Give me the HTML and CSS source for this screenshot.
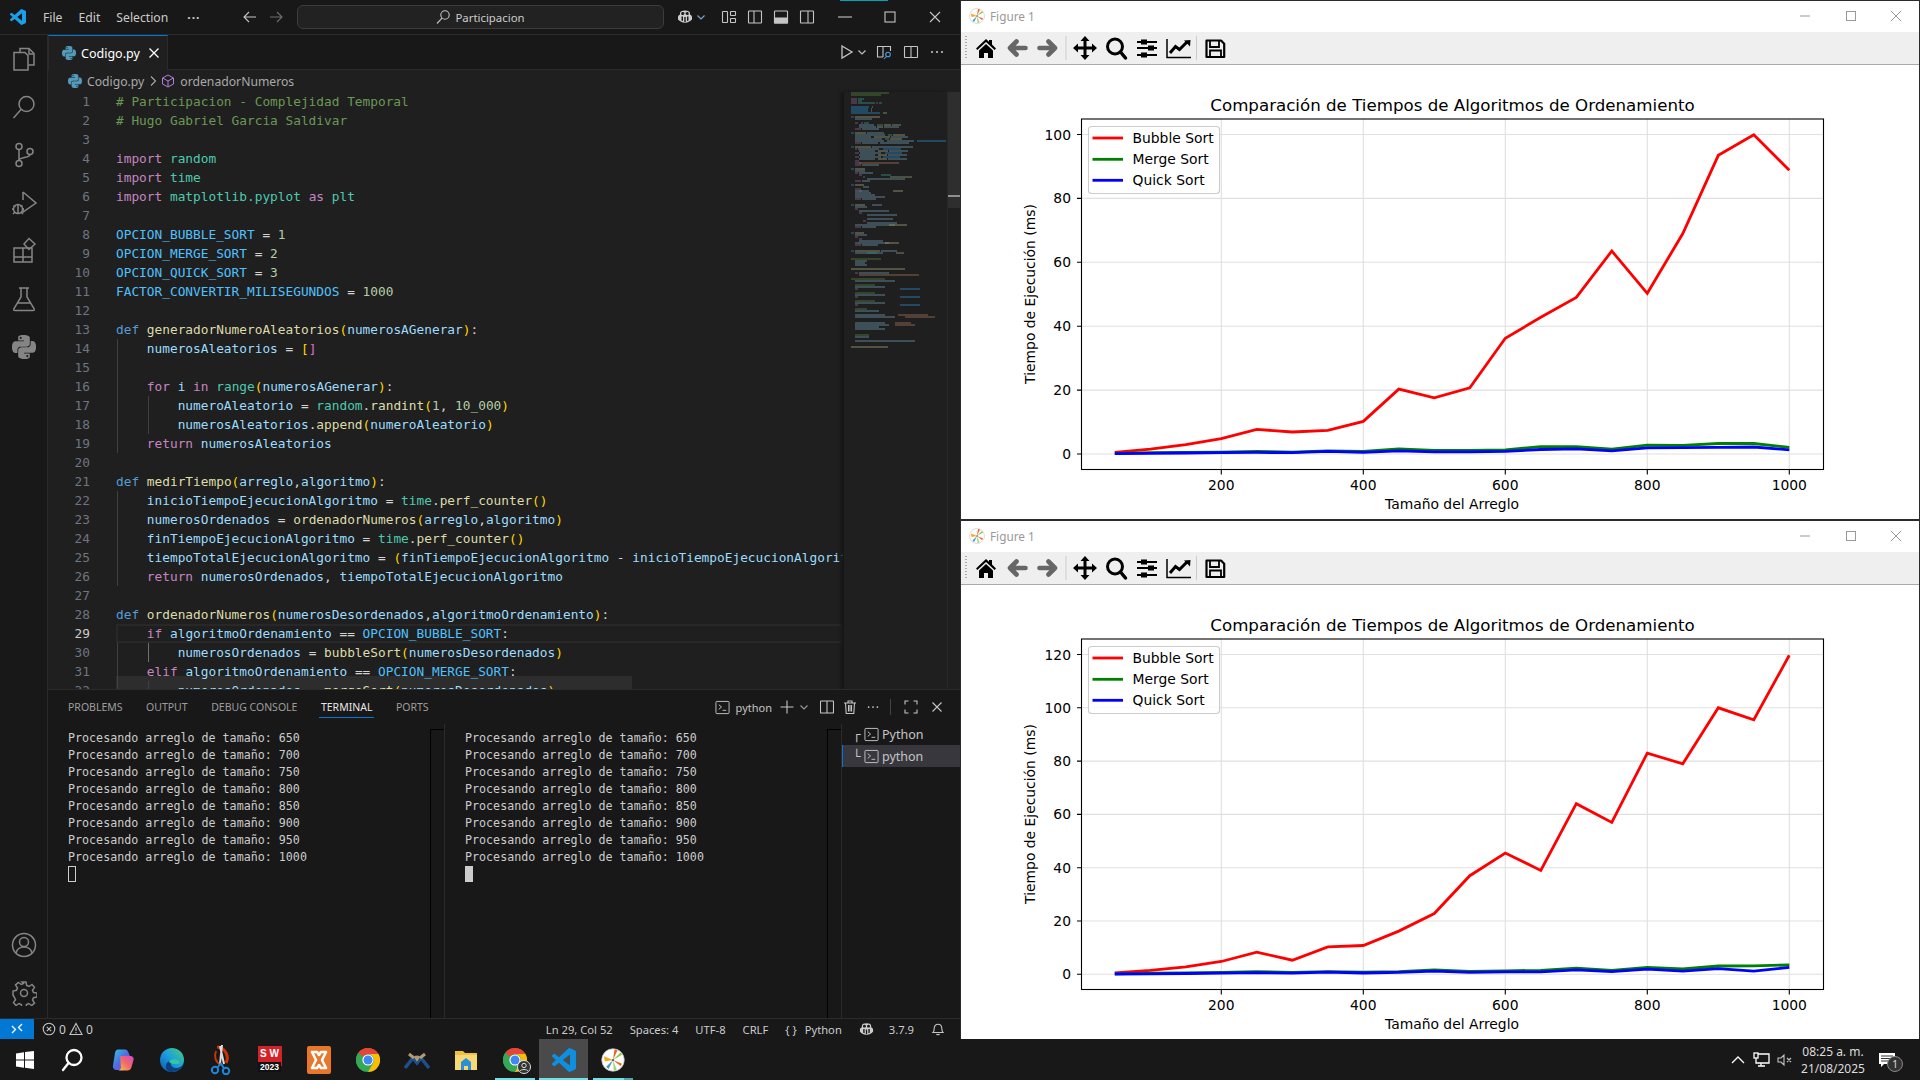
FILE: index.html
```html
<!DOCTYPE html>
<html lang="es">
<head>
<meta charset="utf-8">
<title>Codigo.py</title>
<link rel="stylesheet" href="styles.css">
</head>
<body>
<svg class="defs" width="0" height="0" aria-hidden="true">
  <symbol id="vsc" viewBox="0 0 24 24"><path d="M23.15 2.587L18.21.21a1.494 1.494 0 0 0-1.705.29l-9.46 8.63-4.12-3.128a.999.999 0 0 0-1.276.057L.327 7.261A1 1 0 0 0 .326 8.74L3.899 12 .326 15.26a1 1 0 0 0 .001 1.479L1.65 17.94a.999.999 0 0 0 1.276.057l4.12-3.128 9.46 8.63a1.492 1.492 0 0 0 1.704.29l4.942-2.377A1.5 1.5 0 0 0 24 20.06V3.939a1.5 1.5 0 0 0-.85-1.352zm-5.146 14.861L10.826 12l7.178-5.448v10.896z"/></symbol>
  <symbol id="py" viewBox="0 0 24 24"><path d="M14.25.18l.9.2.73.26.59.3.45.32.34.34.25.34.16.33.1.3.04.26.02.2-.01.13V8.5l-.05.63-.13.55-.21.46-.26.38-.3.31-.33.25-.35.19-.35.14-.33.1-.3.07-.26.04-.21.02H8.77l-.69.05-.59.14-.5.22-.41.27-.33.32-.27.35-.2.36-.15.37-.1.35-.07.32-.04.27-.02.21v3.06H3.17l-.21-.03-.28-.07-.32-.12-.35-.18-.36-.26-.36-.36-.35-.46-.32-.59-.28-.73-.21-.88-.14-1.05-.05-1.23.06-1.22.16-1.04.24-.87.32-.71.36-.57.4-.44.42-.33.42-.24.4-.16.36-.1.32-.05.24-.01h.16l.06.01h8.16v-.83H6.18l-.01-2.75-.02-.37.05-.34.11-.31.17-.28.25-.26.31-.23.38-.2.44-.18.51-.15.58-.12.64-.1.71-.06.77-.04.84-.02 1.27.05zm-6.3 1.98l-.23.33-.08.41.08.41.23.34.33.22.41.09.41-.09.33-.22.23-.34.08-.41-.08-.41-.23-.33-.33-.22-.41-.09-.41.09zm13.09 3.95l.28.06.32.12.35.18.36.27.36.35.35.47.32.59.28.73.21.88.14 1.04.05 1.23-.06 1.23-.16 1.04-.24.86-.32.71-.36.57-.4.45-.42.33-.42.24-.4.16-.36.09-.32.05-.24.02-.16-.01h-8.22v.82h5.84l.01 2.76.02.36-.05.34-.11.31-.17.29-.25.25-.31.24-.38.2-.44.17-.51.15-.58.13-.64.09-.71.07-.77.04-.84.01-1.27-.04-1.07-.14-.9-.2-.73-.25-.59-.3-.45-.33-.34-.34-.25-.34-.16-.33-.1-.3-.04-.25-.02-.2.01-.13v-5.34l.05-.64.13-.54.21-.46.26-.38.3-.32.33-.24.35-.2.35-.14.33-.1.3-.06.26-.04.21-.02.13-.01h5.84l.69-.05.59-.14.5-.21.41-.28.33-.32.27-.35.2-.36.15-.36.1-.35.07-.32.04-.28.02-.21V6.07h2.09l.14.01zm-6.47 14.25l-.23.33-.08.41.08.41.23.33.33.23.41.08.41-.08.33-.23.23-.33.08-.41-.08-.41-.23-.33-.33-.23-.41-.08-.41.08z"/></symbol>
  <symbol id="copilot" viewBox="0 0 16 16"><path fill-rule="evenodd" d="M3 4.2C3 2.2 5 1.4 8 1.4s5 .8 5 2.8v1.4c1.1.4 2 1.400 2 2.500v2.400C13.200 12.400 11 13.800 8 13.800s-5.200-1.400-7-3.300V8.100c0-1.100.9-2.100 2-2.500zM5 3.200c-.7.3-.9 1.400-.6 2.200.3.700 1.800.8 2.600.2.500-.5.500-1.500.2-2-.4-.5-1.400-.7-2.200-.4zm6 0c-.8-.3-1.800-.1-2.200.4-.3.500-.3 1.500.2 2 .8.600 2.300.5 2.600-.2.300-.8.100-1.900-.6-2.200zM4.500 7.500v4l1.500.600v-4.600zm7 0l-1.500 0v4.600l1.500-.6zM7.300 8v5h1.400V8z"/></symbol>
  <symbol id="term" viewBox="0 0 16 16"><rect x="1" y="1.500" width="14" height="13" rx="1" fill="none" stroke="currentColor"/><path d="M4 5l3 2.500L4 10M8 11h4" fill="none" stroke="currentColor"/></symbol>
  <symbol id="mpl" viewBox="0 0 32 32"><circle cx="16" cy="16" r="15" fill="#fff" stroke="#bbb" stroke-width="1"/><path d="M16 16L4 11l1 7z" fill="#f7a81b"/><path d="M16 16L22 3l-4-1z" fill="#e8632a"/><path d="M16 16L28 9l-2-3z" fill="#8dc63f"/><path d="M16 16L26 24l2-3z" fill="#e8632a"/><path d="M16 16L17 30l4-1z" fill="#9fd46a"/><path d="M16 16L7 25l3 3z" fill="#3f93c8"/><circle cx="16" cy="16" r="1.500" fill="#555"/></symbol>
  <symbol id="chrome" viewBox="0 0 24 24"><circle cx="12" cy="12" r="12" fill="#34a853"/><path d="M12 0a12 12 0 0 1 10.400 6H12a6 6 0 0 0-5.200 3L2.500 4.500A12 12 0 0 1 12 0z" fill="#ea4335"/><path d="M22.400 6A12 12 0 0 1 12 24l5.200-9A6 6 0 0 0 12 6z" fill="#fbbc05"/><path d="M2.500 4.500L6.800 15a6 6 0 0 0 5.200 3L8.500 23.500A12 12 0 0 1 2.500 4.500z" fill="#34a853"/><circle cx="12" cy="12" r="5.600" fill="#fff"/><circle cx="12" cy="12" r="4.500" fill="#4285f4"/></symbol>
  <symbol id="tb" viewBox="961 32 280 32">
    <path d="M966 36v24" stroke="#aaa" stroke-width="2" stroke-dasharray="1 2" fill="none"/>
    <path d="M976 48.500L986 39l3 2.800V40h3v4.600l4 3.900-1.400 1.500L986 42l-8.600 8zM979 50.500l7-6.500 7 6.500V58h-5v-5h-4v5h-5z" fill="#000"/>
    <path d="M1025.500 48h-15M1016.500 41.500l-6.500 6.500 6.500 6.500M1039.500 48h15M1048.500 41.500l6.500 6.500-6.500 6.500" fill="none" stroke="#666" stroke-width="4.600" stroke-linecap="round" stroke-linejoin="round"/>
    <path d="M1066 36v24M1196.500 36v24" stroke="#ccc" fill="none"/>
    <path d="M1076 48h18M1085 39v18" stroke="#000" stroke-width="3" fill="none"/>
    <path d="M1085 36l4.500 5h-9zM1085 60l4.500-5h-9zM1073 48l5-4.500v9zM1097 48l-5-4.500v9z" fill="#000"/>
    <circle cx="1115" cy="46.500" r="7.500" fill="none" stroke="#000" stroke-width="3"/>
    <path d="M1120.500 52l5 6" stroke="#000" stroke-width="3.500" stroke-linecap="round" fill="none"/>
    <path d="M1137 42h20M1137 48h20M1137 55h20" stroke="#000" stroke-width="1.800" fill="none"/>
    <path d="M1141 39.500h6v5h-6zM1148 45.500h6v5h-6zM1141 52.500h6v5h-6z" fill="#000"/>
    <path d="M1167 39v18.500h24" stroke="#000" stroke-width="1.500" fill="none"/>
    <path d="M1170 53l5.500-6.500 4 3 7.500-7.500" stroke="#000" stroke-width="3" fill="none"/>
    <path d="M1184 40.500l6.500-.5-.5 6.500z" fill="#000"/>
    <path d="M1206.500 40.500h14.500l3.200 3.200v13.300h-17.700z" fill="none" stroke="#000" stroke-width="2.200" stroke-linejoin="round"/>
    <path d="M1210 41v6h9v-6M1210 56.500v-6h11v6" fill="none" stroke="#000" stroke-width="1.800"/>
  </symbol>
</svg>

<div class="desktop">
  <div class="screen">
    <section class="vscode">
      <header class="titlebar">
        <svg class="logo" width="16" height="16"><use href="#vsc"/></svg>
        <nav class="menu"><span>File</span><span>Edit</span><span>Selection</span><span class="menu-dots">···</span></nav>
        <svg class="nav-back ic" width="16" height="16" viewBox="0 0 16 16"><path d="M14 8H2.500M7 3L2 8l5 5"/></svg>
        <svg class="nav-fwd ic dim" width="16" height="16" viewBox="0 0 16 16"><path d="M2 8h11.500M9 3l5 5-5 5"/></svg>
        <div class="command"><svg class="ic" width="16" height="16" viewBox="0 0 16 16"><circle cx="10" cy="6" r="4.200"/><path d="M7 9.200L2 14.500"/></svg><span>Participacion</span></div>
        <svg class="cop" width="16" height="16" viewBox="0 0 16 16"><use href="#copilot"/></svg>
        <svg class="chev ic" width="10" height="10" viewBox="0 0 10 10"><path d="M1.500 3.500L5 7l3.500-3.500"/></svg>
        <div class="layouts">
          <svg class="ic" width="16" height="16" viewBox="0 0 16 16"><rect x="1.500" y="2.500" width="5" height="11" rx=".5"/><rect x="9.500" y="2.500" width="5" height="4" rx=".5"/><rect x="9.500" y="9.500" width="5" height="4" rx=".5"/></svg>
          <svg class="ic" width="16" height="16" viewBox="0 0 16 16"><rect x="1.500" y="2" width="13" height="12" rx=".5"/><path d="M7 2v12"/></svg>
          <svg class="ic" width="16" height="16" viewBox="0 0 16 16"><rect x="1.500" y="2" width="13" height="12" rx=".5"/><path class="fillc" d="M1.500 9h13v5h-13z"/></svg>
          <svg class="ic" width="16" height="16" viewBox="0 0 16 16"><rect x="1.500" y="2" width="13" height="12" rx=".5"/><path d="M9 2v12"/></svg>
        </div>
        <div class="winctl">
          <svg class="ic" width="16" height="16" viewBox="0 0 16 16"><path d="M1 8h14"/></svg>
          <svg class="ic" width="16" height="16" viewBox="0 0 16 16"><rect x="3" y="3" width="10" height="10"/></svg>
          <svg class="ic" width="16" height="16" viewBox="0 0 16 16"><path d="M3 3l10 10M13 3L3 13"/></svg>
        </div>
      </header>
      <div class="workspace">
        <aside class="activity">
          <div class="act-top">
            <svg class="ico" width="28" height="28" viewBox="0 0 28 28"><path d="M10 7V3.500h9l5 5V20h-5.500"/><path d="M19 3.500V9h5"/><path d="M4 7.500h11l3 3V25H4z"/></svg>
            <svg class="ico" width="28" height="28" viewBox="0 0 28 28"><circle cx="16.500" cy="11" r="7.500"/><path d="M11 16.500L3.500 25"/></svg>
            <svg class="ico" width="28" height="28" viewBox="0 0 28 28"><circle cx="9" cy="5.500" r="3"/><circle cx="9" cy="22.500" r="3"/><circle cx="20" cy="10.500" r="3"/><path d="M9 8.500v11M20 13.500c0 4-11 2-11 6"/></svg>
            <svg class="ico" width="28" height="28" viewBox="0 0 28 28"><path d="M13 3l13 11-13 9v-4M13 3v8"/><circle cx="8" cy="20" r="4.500"/><path d="M3.500 16.500l2 1.500M12.500 16.500l-2 1.500M2 20h2M12 20h2M3 25l2-2M13 25l-2-2M8 15.500v9"/></svg>
            <svg class="ico" width="28" height="28" viewBox="0 0 28 28"><path d="M4 11h9v9H4zM4 20h9v5H4zM13 20h9v5h-9zM13 11h9v9h-9z"/><path d="M19 1.500l6 5.500-6 5.500-5-5.500z"/></svg>
            <svg class="ico" width="28" height="28" viewBox="0 0 28 28"><path d="M9 3h10M11 3v9L4 23.500q-1 2 1 2h18q2 0 1-2L17 12V3M8 18h12"/></svg>
            <svg class="py-act" width="24" height="24"><use href="#py"/></svg>
          </div>
          <div class="act-bottom">
            <svg class="ico" width="26" height="26" viewBox="0 0 26 26"><circle cx="13" cy="13" r="11.500"/><circle cx="13" cy="10" r="4.500"/><path d="M5 21c1-4 4-6 8-6s7 2 8 6"/></svg>
            <svg class="ico" width="26" height="26" viewBox="0 0 26 26"><circle cx="13" cy="13" r="3.500"/><path d="M11 2h4l.7 3.500 2.300 1 3-2 2.500 2.800-2 3 1 2.200 3.500.5v4l-3.500.7-1 2.300 2 3-2.800 2.500-3-2-2.200 1-.5 3.500h-4l-.7-3.500-2.300-1-3 2-2.500-2.800 2-3-1-2.200L2 15v-4l3.500-.7 1-2.300-2-3 2.800-2.500 3 2 2.200-1z"/></svg>
          </div>
        </aside>
        <main class="main">
          <div class="tabs">
            <div class="tab">
              <svg class="pyico" width="14" height="14"><use href="#py"/></svg>
              <span class="tab-name">Codigo.py</span>
              <svg class="ic white" width="12" height="12" viewBox="0 0 12 12"><path d="M1.500 1.500l9 9M10.500 1.500l-9 9"/></svg>
            </div>
            <div class="tab-actions">
              <svg class="run" width="16" height="16" viewBox="0 0 16 16"><path d="M4 2l10 6-10 6z" fill="none" stroke="#c5c5c5" stroke-width="1.300"/></svg>
              <svg class="ic small-chev" width="10" height="10" viewBox="0 0 10 10"><path d="M1.500 3.500L5 7l3.500-3.500"/></svg>
              <svg class="ic act-a" width="16" height="16" viewBox="0 0 16 16"><path d="M7 13H1.500V2.500h13V7M7 2.500V13"/><circle cx="12" cy="10.500" r="2.300" stroke="#4a9ae0"/><path d="M10.300 12.500L8 15" stroke="#4a9ae0"/></svg>
              <svg class="ic act-b" width="16" height="16" viewBox="0 0 16 16"><rect x="1.500" y="2.500" width="13" height="11" rx=".5"/><path d="M8 2.500v11"/></svg>
              <svg class="dots act-c" width="16" height="16" viewBox="0 0 16 16"><circle cx="3" cy="8" r="1"/><circle cx="8" cy="8" r="1"/><circle cx="13" cy="8" r="1"/></svg>
            </div>
          </div>
          <div class="editor">
            <div class="crumbs">
              <svg class="pyico" width="14" height="14"><use href="#py"/></svg>
              <span>Codigo.py</span>
              <svg class="ic crumb-sep" width="10" height="12" viewBox="0 0 10 12"><path d="M3 1.500L7.500 6 3 10.500"/></svg>
              <svg class="cube" width="14" height="14" viewBox="0 0 14 14"><path d="M7 1l5.500 3v6L7 13 1.500 10V4zM1.500 4L7 7l5.500-3M7 7v6"/></svg>
              <span>ordenadorNumeros</span>
            </div>
            <div class="editor-body">
              <div class="code">
                <span class="hover-band"></span>
                <div class="ln"><b>1</b><code class="c"># Participacion - Complejidad Temporal</code></div>
                <div class="ln"><b>2</b><code class="c"># Hugo Gabriel Garcia Saldivar</code></div>
                <div class="ln"><b>3</b><code></code></div>
                <div class="ln"><b>4</b><code><i class="k">import</i> <i class="m">random</i></code></div>
                <div class="ln"><b>5</b><code><i class="k">import</i> <i class="m">time</i></code></div>
                <div class="ln"><b>6</b><code><i class="k">import</i> <i class="m">matplotlib.pyplot</i> <i class="k">as</i> <i class="m">plt</i></code></div>
                <div class="ln"><b>7</b><code></code></div>
                <div class="ln"><b>8</b><code><i class="o">OPCION_BUBBLE_SORT</i> = <i class="n">1</i></code></div>
                <div class="ln"><b>9</b><code><i class="o">OPCION_MERGE_SORT</i> = <i class="n">2</i></code></div>
                <div class="ln"><b>10</b><code><i class="o">OPCION_QUICK_SORT</i> = <i class="n">3</i></code></div>
                <div class="ln"><b>11</b><code><i class="o">FACTOR_CONVERTIR_MILISEGUNDOS</i> = <i class="n">1000</i></code></div>
                <div class="ln"><b>12</b><code></code></div>
                <div class="ln"><b>13</b><code><i class="d">def</i> <i class="f">generadorNumeroAleatorios</i><i class="y">(</i><i class="v">numerosAGenerar</i><i class="y">)</i>:</code></div>
                <div class="ln"><b>14</b><code class="g1">    <i class="v">numerosAleatorios</i> = <i class="y">[</i><i class="p">]</i></code></div>
                <div class="ln"><b>15</b><code class="g1"></code></div>
                <div class="ln"><b>16</b><code class="g1">    <i class="k">for</i> <i class="v">i</i> <i class="k">in</i> <i class="m">range</i><i class="y">(</i><i class="v">numerosAGenerar</i><i class="y">)</i>:</code></div>
                <div class="ln"><b>17</b><code class="g2">        <i class="v">numeroAleatorio</i> = <i class="m">random</i>.<i class="f">randint</i><i class="y">(</i><i class="n">1</i>, <i class="n">10_000</i><i class="y">)</i></code></div>
                <div class="ln"><b>18</b><code class="g2">        <i class="v">numerosAleatorios</i>.<i class="f">append</i><i class="y">(</i><i class="v">numeroAleatorio</i><i class="y">)</i></code></div>
                <div class="ln"><b>19</b><code class="g1">    <i class="k">return</i> <i class="v">numerosAleatorios</i></code></div>
                <div class="ln"><b>20</b><code></code></div>
                <div class="ln"><b>21</b><code><i class="d">def</i> <i class="f">medirTiempo</i><i class="y">(</i><i class="v">arreglo</i>,<i class="v">algoritmo</i><i class="y">)</i>:</code></div>
                <div class="ln"><b>22</b><code class="g1">    <i class="v">inicioTiempoEjecucionAlgoritmo</i> = <i class="m">time</i>.<i class="f">perf_counter</i><i class="y">(</i><i class="y">)</i></code></div>
                <div class="ln"><b>23</b><code class="g1">    <i class="v">numerosOrdenados</i> = <i class="f">ordenadorNumeros</i><i class="y">(</i><i class="v">arreglo</i>,<i class="v">algoritmo</i><i class="y">)</i></code></div>
                <div class="ln"><b>24</b><code class="g1">    <i class="v">finTiempoEjecucionAlgoritmo</i> = <i class="m">time</i>.<i class="f">perf_counter</i><i class="y">(</i><i class="y">)</i></code></div>
                <div class="ln"><b>25</b><code class="g1">    <i class="v">tiempoTotalEjecucionAlgoritmo</i> = <i class="y">(</i><i class="v">finTiempoEjecucionAlgoritmo</i> - <i class="v">inicioTiempoEjecucionAlgoritmo</i><i class="y">)</i> * <i class="o">FACTOR_CONVERTIR_MILISEGUNDOS</i></code></div>
                <div class="ln"><b>26</b><code class="g1">    <i class="k">return</i> <i class="v">numerosOrdenados</i>, <i class="v">tiempoTotalEjecucionAlgoritmo</i></code></div>
                <div class="ln"><b>27</b><code></code></div>
                <div class="ln"><b>28</b><code><i class="d">def</i> <i class="f">ordenadorNumeros</i><i class="y">(</i><i class="v">numerosDesordenados</i>,<i class="v">algoritmoOrdenamiento</i><i class="y">)</i>:</code></div>
                <div class="ln active"><b>29</b><code class="g1">    <i class="k">if</i> <i class="v">algoritmoOrdenamiento</i> == <i class="o">OPCION_BUBBLE_SORT</i>:</code></div>
                <div class="ln"><b>30</b><code class="g2 hot">        <i class="v">numerosOrdenados</i> = <i class="f">bubbleSort</i><i class="y">(</i><i class="v">numerosDesordenados</i><i class="y">)</i></code></div>
                <div class="ln"><b>31</b><code class="g1">    <i class="k">elif</i> <i class="v">algoritmoOrdenamiento</i> == <i class="o">OPCION_MERGE_SORT</i>:</code></div>
                <div class="ln"><b>32</b><code class="g2">        <i class="v">numerosOrdenados</i> = <i class="f">mergeSort</i><i class="y">(</i><i class="v">numerosDesordenados</i><i class="y">)</i></code></div>
              </div>
              <div class="minimap">
                <svg width="104" height="262" viewBox="843 92 104 262" fill="none" stroke-width="1">
                  <path stroke="#55803f" d="M851 93h38M851 95h30M851 259h30M851 279h34M855 285h20M855 293h20M855 301h20M855 309h12M855 335h14"/>
                  <path stroke="#8f5f8c" d="M851 99h6M851 101h6M851 103h6M876 103h2M855 123h3M861 123h2M855 129h6M855 143h6M855 149h2M855 153h4M855 157h4M855 161h4M855 163h6M855 165h6M855 173h3M859 175h3M863 177h2M855 181h6M855 189h6M859 191h3M855 199h6M855 209h3M859 213h3M863 221h3M855 227h6M855 237h3M859 239h3M855 245h6M855 273h3M855 289h3M855 297h3M855 305h3"/>
                  <path stroke="#3a78a8" d="M851 117h3M851 133h3M851 147h3M851 169h3M851 185h3M851 205h3M851 233h3M851 251h3"/>
                  <path stroke="#2b8cc8" d="M851 107h18M851 109h17M851 111h17M851 113h29M883 149h18M885 153h17M883 157h17M917 141h29M900 289h20M900 297h20M900 305h20"/>
                  <path stroke="#6f98ad" d="M855 119h17M859 125h15M859 127h17M884 127h15M862 129h17M867 133h17M855 135h30M855 137h16M891 137h17M855 139h27M855 141h29M887 141h27M862 143h16M880 143h29M872 147h41M858 149h21M859 151h16M889 151h19M860 153h21M859 155h16M888 155h19M860 157h21M859 159h16M888 159h19M862 165h17M855 171h10M859 173h14M867 179h38M862 181h8M863 187h6M855 191h14M855 193h16M855 195h20M855 197h30M862 199h14M872 205h10M855 207h12M859 211h30M867 215h30M867 219h26M867 223h30M855 225h40M862 227h14M855 235h12M859 241h24M855 243h34M862 245h16M881 251h16M855 253h28M855 261h12M855 263h10M855 265h12M859 273h30M855 281h40M855 287h30M855 295h30M855 303h30M855 311h24M855 315h30M855 317h40M855 323h30M855 325h34M855 327h24M855 329h30M855 337h14M855 341h60"/>
                  <path stroke="#a5a57a" d="M855 117h25M855 133h11M884 125h7M877 127h6M893 135h12M874 137h16M890 139h12M855 147h16M878 151h10M878 155h9M878 159h9M855 169h10M855 185h9M855 205h10M855 233h9M855 251h25M851 269h54M851 347h37M893 191h10M889 225h18M885 243h14"/>
                  <path stroke="#3a9682" d="M858 99h6M858 101h4M858 103h17M879 103h3M864 123h5M877 125h6M888 135h4M885 139h4M881 175h10M867 253h10"/>
                  <path stroke="#8c9f78" d="M872 107h1M871 109h1M871 111h1M883 113h4M892 125h9M890 177h22M896 253h8"/>
                  <path stroke="#a8745c" d="M859 163h40M859 275h60M898 315h30M905 317h30M895 323h16M895 325h20"/>
                </svg>
              </div>
              <div class="vscroll"><span class="slider"><span class="marker"></span></span></div>
            </div>
          </div>
          <div class="panel">
            <div class="panel-head">
              <div class="panel-tabs"><span>PROBLEMS</span><span>OUTPUT</span><span>DEBUG CONSOLE</span><span class="on">TERMINAL</span><span>PORTS</span></div>
              <div class="panel-actions">
                <svg class="termic" width="15" height="15"><use href="#term"/></svg>
                <span class="pname">python</span>
                <svg class="ic pa-plus" width="16" height="16" viewBox="0 0 16 16"><path d="M8 1.500v13M1.500 8h13"/></svg>
                <svg class="ic pa-chev" width="10" height="10" viewBox="0 0 10 10"><path d="M1.500 3.500L5 7l3.500-3.500"/></svg>
                <svg class="ic pa-split" width="14" height="14" viewBox="0 0 14 14"><rect x=".5" y="1" width="13" height="12" rx=".5"/><path d="M7 1v12"/></svg>
                <svg class="ic pa-trash" width="14" height="14" viewBox="0 0 14 14"><path d="M1 3h12M5 3V1h4v2M2.500 3l.7 10.500h7.600L11.500 3M5.500 5v6.500M7 5v6.500M8.500 5v6.500"/></svg>
                <svg class="dots pa-dots" width="14" height="14" viewBox="0 0 16 16"><circle cx="3" cy="8" r="1"/><circle cx="8" cy="8" r="1"/><circle cx="13" cy="8" r="1"/></svg>
                <span class="pa-sep"></span>
                <svg class="ic pa-max" width="14" height="14" viewBox="0 0 14 14"><path d="M1 4.500V1h3.500M9.500 1H13v3.500M13 9.500V13H9.500M4.500 13H1V9.500"/></svg>
                <svg class="ic pa-close" width="12" height="12" viewBox="0 0 12 12"><path d="M1.500 1.500l9 9M10.500 1.500l-9 9"/></svg>
              </div>
            </div>
            <div class="panel-body">
              <div class="pane">
                <pre class="term">Procesando arreglo de tamaño: 650
Procesando arreglo de tamaño: 700
Procesando arreglo de tamaño: 750
Procesando arreglo de tamaño: 800
Procesando arreglo de tamaño: 850
Procesando arreglo de tamaño: 900
Procesando arreglo de tamaño: 950
Procesando arreglo de tamaño: 1000
<span class="cur"></span></pre>
                <div class="ruler"></div>
              </div>
              <div class="pane">
                <pre class="term">Procesando arreglo de tamaño: 650
Procesando arreglo de tamaño: 700
Procesando arreglo de tamaño: 750
Procesando arreglo de tamaño: 800
Procesando arreglo de tamaño: 850
Procesando arreglo de tamaño: 900
Procesando arreglo de tamaño: 950
Procesando arreglo de tamaño: 1000
<span class="cur solid"></span></pre>
                <div class="ruler"></div>
              </div>
              <div class="termlist">
                <div class="titem"><span class="tree">┌</span><svg width="15" height="15"><use href="#term"/></svg><span>Python</span></div>
                <div class="titem sel"><span class="tree">└</span><svg width="15" height="15"><use href="#term"/></svg><span>python</span></div>
              </div>
            </div>
          </div>
        </main>
      </div>
      <footer class="status">
        <div class="remote"><svg class="ic white" width="14" height="14" viewBox="0 0 14 14"><path d="M2 4l3.500 3.500L2 11M12 2L8.500 5.500 12 9"/></svg></div>
        <div class="problems">
          <svg class="ic" width="14" height="14" viewBox="0 0 14 14"><circle cx="7" cy="7" r="5.800"/><path d="M4.800 4.800l4.400 4.400M9.200 4.800l-4.400 4.400"/></svg><span>0</span>
          <svg class="ic" width="14" height="14" viewBox="0 0 14 14"><path d="M7 1.500l6 11H1zM7 5.500v3.500M7 10v1.200"/></svg><span>0</span>
        </div>
        <div class="status-right">
          <span>Ln 29, Col 52</span><span>Spaces: 4</span><span>UTF-8</span><span>CRLF</span>
          <span class="lang"><i class="braces">{ }</i>Python</span>
          <svg class="cop" width="15" height="15" viewBox="0 0 16 16"><use href="#copilot"/></svg>
          <span>3.7.9</span>
          <svg class="ic" width="14" height="14" viewBox="0 0 14 14"><path d="M2 10.500c1-1 1.200-2 1.200-4 0-2.500 1.600-4.300 3.800-4.300s3.800 1.800 3.800 4.300c0 2 .2 3 1.200 4zM5.500 12c.3.800 2.700.8 3 0"/></svg>
        </div>
      </footer>
    </section>

    <div class="figures">
      <section class="figure">
        <div class="fig-title">
          <svg width="16" height="16"><use href="#mpl"/></svg><span>Figure 1</span>
          <div class="fig-ctl">
            <svg width="12" height="12" viewBox="0 0 12 12"><path d="M1 6h10"/></svg>
            <svg width="12" height="12" viewBox="0 0 12 12"><rect x="1.500" y="1.500" width="9" height="9"/></svg>
            <svg width="12" height="12" viewBox="0 0 12 12"><path d="M1 1l10 10M11 1L1 11"/></svg>
          </div>
        </div>
        <div class="fig-tools"><svg width="280" height="32"><use href="#tb"/></svg></div>
        <svg class="chart" width="958" height="454" viewBox="961 65 958 454">
          <text class="t-title" x="1452.500" y="110.500">Comparación de Tiempos de Algoritmos de Ordenamiento</text>
          <g class="grid"><path d="M1221.300 119v350.500M1363.300 119v350.500M1505.300 119v350.500M1647.300 119v350.500M1789.300 119v350.500M1082 454h741.500M1082 390.100h741.500M1082 326.200h741.500M1082 262.300h741.500M1082 198.400h741.500M1082 134.500h741.500"/></g>
          <g class="tk"><path d="M1221.300 469.500v5M1363.300 469.500v5M1505.300 469.500v5M1647.300 469.500v5M1789.300 469.500v5M1082 454h-5M1082 390.100h-5M1082 326.200h-5M1082 262.300h-5M1082 198.400h-5M1082 134.500h-5"/></g>
          <polyline class="l r" points="1114.8,452.4 1150.3,449.2 1185.8,444.7 1221.3,438.7 1256.8,429.4 1292.3,432 1327.8,430.4 1363.3,421.4 1398.8,389.1 1434.3,397.8 1469.8,387.9 1505.3,338.3 1540.8,317.3 1576.3,297.4 1611.8,251 1647.3,293.3 1682.8,233.5 1718.3,155.3 1753.8,134.7 1789.3,170.3"/>
          <polyline class="l g" points="1114.8,453.4 1150.3,452.7 1185.8,452.4 1221.3,452.1 1256.8,451.4 1292.3,452.1 1327.8,450.8 1363.3,451.4 1398.8,448.9 1434.3,450.5 1469.8,450.5 1505.3,449.8 1540.8,446.7 1576.3,446.7 1611.8,449.2 1647.3,445.1 1682.8,445.4 1718.3,443.5 1753.8,443.5 1789.3,447.3"/>
          <polyline class="l b" points="1114.8,453.7 1150.3,453.4 1185.8,453 1221.3,452.7 1256.8,452.4 1292.3,452.7 1327.8,451.4 1363.3,452.4 1398.8,450.8 1434.3,451.8 1469.8,451.8 1505.3,451.4 1540.8,449.5 1576.3,448.9 1611.8,450.8 1647.3,447.9 1682.8,447.6 1718.3,447.3 1753.8,447 1789.3,449.8"/>
          <rect class="axes" x="1081.500" y="119" width="742" height="350.500"/>
          <g class="xt"><text x="1221.300" y="490">200</text><text x="1363.300" y="490">400</text><text x="1505.300" y="490">600</text><text x="1647.300" y="490">800</text><text x="1789.300" y="490">1000</text></g>
          <g class="yt"><text x="1071" y="459">0</text><text x="1071" y="395">20</text><text x="1071" y="331">40</text><text x="1071" y="267">60</text><text x="1071" y="203">80</text><text x="1071" y="140">100</text></g>
          <text class="t-lab" x="1452" y="509">Tamaño del Arreglo</text>
          <text class="t-lab" transform="translate(1035 294) rotate(-90)">Tiempo de Ejecución (ms)</text>
          <rect class="lg" x="1088.500" y="126.500" width="131" height="67" rx="3"/>
          <path class="l r" d="M1092.500 138h30.500"/><path class="l g" d="M1092.500 159.300h30.500"/><path class="l b" d="M1092.500 180.300h30.500"/>
          <g class="lt"><text x="1132.500" y="143">Bubble Sort</text><text x="1132.500" y="164">Merge Sort</text><text x="1132.500" y="185">Quick Sort</text></g>
        </svg>
      </section>
      <section class="figure">
        <div class="fig-title">
          <svg width="16" height="16"><use href="#mpl"/></svg><span>Figure 1</span>
          <div class="fig-ctl">
            <svg width="12" height="12" viewBox="0 0 12 12"><path d="M1 6h10"/></svg>
            <svg width="12" height="12" viewBox="0 0 12 12"><rect x="1.500" y="1.500" width="9" height="9"/></svg>
            <svg width="12" height="12" viewBox="0 0 12 12"><path d="M1 1l10 10M11 1L1 11"/></svg>
          </div>
        </div>
        <div class="fig-tools"><svg width="280" height="32"><use href="#tb"/></svg></div>
        <svg class="chart" width="958" height="454" viewBox="961 585 958 454">
          <text class="t-title" x="1452.500" y="630.500">Comparación de Tiempos de Algoritmos de Ordenamiento</text>
          <g class="grid"><path d="M1221.300 639v350.500M1363.300 639v350.500M1505.300 639v350.500M1647.300 639v350.500M1789.300 639v350.500M1082 974.300h741.500M1082 921h741.500M1082 867.700h741.500M1082 814.400h741.500M1082 761.100h741.500M1082 707.800h741.500M1082 654.500h741.500"/></g>
          <g class="tk"><path d="M1221.300 989.500v5M1363.300 989.500v5M1505.300 989.500v5M1647.300 989.500v5M1789.300 989.500v5M1082 974.300h-5M1082 921h-5M1082 867.700h-5M1082 814.400h-5M1082 761.100h-5M1082 707.800h-5M1082 654.500h-5"/></g>
          <polyline class="l r" points="1114.8,973 1150.3,970.3 1185.8,966.8 1221.3,961.5 1256.8,952.2 1292.3,960.2 1327.8,946.9 1363.3,945.5 1398.8,931.1 1434.3,913.5 1469.8,875.7 1505.3,853 1540.8,870.4 1576.3,803.7 1611.8,822.4 1647.3,753.1 1682.8,763.8 1718.3,707.8 1753.8,719.8 1789.3,655.3"/>
          <polyline class="l g" points="1114.8,973.8 1150.3,973.2 1185.8,973 1221.3,972.4 1256.8,971.6 1292.3,972.4 1327.8,971.6 1363.3,972.2 1398.8,971.6 1434.3,970 1469.8,971.4 1505.3,970.8 1540.8,970.3 1576.3,968.2 1611.8,970.3 1647.3,967.4 1682.8,969 1718.3,966 1753.8,965.8 1789.3,965"/>
          <polyline class="l b" points="1114.8,974 1150.3,973.8 1185.8,973.5 1221.3,973.2 1256.8,972.7 1292.3,973.2 1327.8,972.2 1363.3,973 1398.8,972.4 1434.3,971.1 1469.8,972.4 1505.3,971.9 1540.8,971.9 1576.3,969.8 1611.8,971.6 1647.3,969.2 1682.8,971.1 1718.3,968.7 1753.8,971.1 1789.3,967.4"/>
          <rect class="axes" x="1081.500" y="639" width="742" height="350.500"/>
          <g class="xt"><text x="1221.300" y="1010">200</text><text x="1363.300" y="1010">400</text><text x="1505.300" y="1010">600</text><text x="1647.300" y="1010">800</text><text x="1789.300" y="1010">1000</text></g>
          <g class="yt"><text x="1071" y="979">0</text><text x="1071" y="926">20</text><text x="1071" y="873">40</text><text x="1071" y="819">60</text><text x="1071" y="766">80</text><text x="1071" y="713">100</text><text x="1071" y="660">120</text></g>
          <text class="t-lab" x="1452" y="1029">Tamaño del Arreglo</text>
          <text class="t-lab" transform="translate(1035 814) rotate(-90)">Tiempo de Ejecución (ms)</text>
          <rect class="lg" x="1088.500" y="646.500" width="131" height="67" rx="3"/>
          <path class="l r" d="M1092.500 658h30.500"/><path class="l g" d="M1092.500 679.300h30.500"/><path class="l b" d="M1092.500 700.300h30.500"/>
          <g class="lt"><text x="1132.500" y="663">Bubble Sort</text><text x="1132.500" y="684">Merge Sort</text><text x="1132.500" y="705">Quick Sort</text></g>
        </svg>
      </section>
    </div>
  </div>

  <footer class="taskbar">
    <div class="tb-item"><svg width="20" height="20" viewBox="0 0 20 20" fill="#fff"><path d="M1 3.500l8-1.200V9.500H1zM10 2.100L19 1v8.500h-9zM1 10.500h8v7.200l-8-1.200zM10 10.500h9V19l-9-1.200z"/></svg></div>
    <div class="tb-item search-task"><svg width="24" height="24" viewBox="0 0 24 24" fill="none" stroke="#fff" stroke-width="2.300"><circle cx="14" cy="9.500" r="7.500"/><path d="M8.500 15L3 22" stroke-linecap="round"/></svg></div>
    <div class="tb-item"><svg width="24" height="24" viewBox="0 0 24 24"><defs><linearGradient id="cpa" x1="0" y1="0" x2="1" y2="1"><stop offset="0" stop-color="#2ec5e8"/><stop offset=".5" stop-color="#4f6be0"/><stop offset="1" stop-color="#a640d0"/></linearGradient><linearGradient id="cpb" x1="0" y1="1" x2="1" y2="0"><stop offset="0" stop-color="#f7c83a"/><stop offset=".5" stop-color="#f06a6a"/><stop offset="1" stop-color="#d946c8"/></linearGradient></defs><path d="M7 1.500h7c2 0 3 1.500 3.500 3L20 11 11 22H6c-3 0-4.500-2-4-4.500L4 5c.4-2 1.500-3.500 3-3.500z" fill="url(#cpa)"/><path d="M9 8h10c3 0 4 2 3.500 4l-2 7c-.5 2-2 3.500-4 3.500H7c1.500 0 2.500-1 3-2.500z" fill="url(#cpb)"/></svg></div>
    <div class="tb-item"><svg width="24" height="24" viewBox="0 0 24 24"><defs><linearGradient id="edg" x1="0" y1="1" x2="1" y2="0"><stop offset="0" stop-color="#0c59a4"/><stop offset=".5" stop-color="#1b9de2"/><stop offset="1" stop-color="#45d26e"/></linearGradient></defs><circle cx="12" cy="12" r="12" fill="url(#edg)"/><path d="M23.500 15c-1.500 5-6 9-11.500 9-4 0-7-2.500-6-7 .5-3 4-5 6-3-3 3 1 6.500 5 6 3-.3 5-2 6.500-5z" fill="#0b3f80"/><path d="M9 14c1-3 7-4 10-1 1 1 .5 3-1 3h-4c-2 0-4-1-5-2z" fill="#34c6a0"/></svg></div>
    <div class="tb-item"><svg width="24" height="30" viewBox="0 0 24 30" fill="none"><path d="M8 2a11 11 0 0 1 9 16" stroke="#c93400" stroke-width="3"/><path d="M7 6c-2 5-1 11 5 14" stroke="#c93400" stroke-width="2"/><path d="M13 0l-2 19M11 1l4 18" stroke="#ddd" stroke-width="2"/><circle cx="6" cy="25" r="3.200" stroke="#1a86dc" stroke-width="2"/><circle cx="17" cy="26" r="3.200" stroke="#1a86dc" stroke-width="2"/><path d="M8 23l4-5M15 23.500l-3-5" stroke="#1a86dc" stroke-width="2"/></svg></div>
    <div class="tb-item"><span class="sw"><span class="sw-top">S W</span><span class="sw-yr">2023</span></span></div>
    <div class="tb-item"><svg width="24" height="28" viewBox="0 0 24 28"><rect width="24" height="28" rx="2" fill="#e8772a"/><path d="M5 6h5l2 3 2-3h5l-4 8 4 8h-5l-2-3-2 3H5l4-8z" fill="none" stroke="#fff" stroke-width="2.600" stroke-linejoin="round"/></svg></div>
    <div class="tb-item"><svg width="24" height="24"><use href="#chrome"/></svg></div>
    <div class="tb-item"><svg width="26" height="24" viewBox="0 0 26 24" fill="none"><path d="M1 20L9 10l4 5 4-5 8 10" stroke="#1c4f8c" stroke-width="3.500"/><path d="M5 6l5 4M21 6l-5 4M11 8l2 3 2-3" stroke="#b39a70" stroke-width="3"/></svg></div>
    <div class="tb-item"><svg width="24" height="24" viewBox="0 0 24 24"><path d="M1 3h8l2 2h12v17H1z" fill="#f0c040"/><path d="M1 7h22v15H1z" fill="#f8d775"/><path d="M7 14l5-4 5 4v8h-3v-4h-4v4H7z" fill="#2a8fd8"/></svg></div>
    <div class="tb-item run40"><span class="chrome-badge"><svg width="24" height="24"><use href="#chrome"/></svg><svg class="badge" width="14" height="14" viewBox="0 0 14 14" fill="none" stroke="#ddd"><circle cx="7" cy="7" r="6.500" fill="#333"/><circle cx="7" cy="5.500" r="2.200"/><path d="M3 11c1-2 7-2 8 0"/></svg></span></div>
    <div class="tb-item active"><svg class="vs-task" width="24" height="24"><use href="#vsc"/></svg></div>
    <div class="tb-item runmpl"><svg width="24" height="24"><use href="#mpl"/></svg></div>
    <div class="tray">
      <svg class="ic white" width="14" height="14" viewBox="0 0 14 14"><path d="M1 10l6-6 6 6"/></svg>
      <svg class="ic white" width="17" height="15" viewBox="0 0 17 15"><path d="M5 2h11v9H3V6M8 11v3M5 14h7"/><rect x="1" y="1" width="4" height="5"/></svg>
      <svg class="ic" width="16" height="14" viewBox="0 0 16 14"><path d="M1 5h3l3-3v10L4 9H1zM10 5l4 4M14 5l-4 4"/></svg>
      <div class="clock"><span>08:25 a. m.</span><span>21/08/2025</span></div>
      <span class="notif"><svg width="16" height="14" viewBox="0 0 16 14" fill="#fff"><path d="M0 0h16v11H5l-3 3v-3H0z"/><path d="M2 3h12M2 5.500h12M2 8h12" stroke="#333"/></svg><span class="notif-n">1</span></span>
    </div>
  </footer>
</div>
</body>
</html>
```
FILE: styles.css
```css
* { box-sizing: border-box; }
html, body { margin: 0; height: 100%; overflow: hidden; background: #181818; }
body { font-family: "Noto Sans", "Open Sans", sans-serif; color: #ccc; }
.defs { position: absolute; }
svg { display: block; flex: none; }
.desktop { width: 1920px; height: 1080px; display: flex; flex-direction: column; }
.screen { height: 1039px; display: flex; }

.ic { fill: none; stroke: #c5c5c5; stroke-width: 1.100; }
.ic.dim { stroke: #6e6e6e; }
.ic.white { stroke: #fff; stroke-width: 1.300; }
.fillc { fill: #c5c5c5; }
.dots { fill: #ccc; }
.ico { fill: none; stroke: #858585; stroke-width: 1.500; }

/* vs code window */
.vscode { width: 960px; display: flex; flex-direction: column; background: #181818; }
.titlebar { height: 35px; flex: none; display: flex; align-items: center; border-bottom: 1px solid #2b2b2b; position: relative; font-size: 12.200px; }
.logo { margin-left: 10px; fill: #1a9fe8; }
.menu { display: flex; gap: 16px; margin-left: 17px; }
.menu-dots { margin-left: 3px; letter-spacing: 1px; font-weight: 700; }
.nav-back { margin-left: 41px; }
.nav-fwd { margin-left: 10px; }
.command { width: 367px; height: 24px; margin-left: 13px; display: flex; align-items: center; justify-content: center; gap: 4px; background: #222; border: 1px solid #3c3c3c; border-radius: 6px; font-size: 11.400px; }
.cop { fill: #ccc; margin-left: 13px; }
.chev { margin-left: 3px; stroke: #7aa7d6; }
.layouts { display: flex; gap: 10px; margin-left: 15px; }
.winctl { display: flex; gap: 29px; margin-left: 22.500px; }
.titlebar::after { content: ""; position: absolute; left: 840px; top: 0; width: 48px; height: 1px; background: #00a5b5; }

.workspace { height: 983px; flex: none; display: flex; }
.activity { width: 48px; border-right: 1px solid #2b2b2b; display: flex; flex-direction: column; justify-content: space-between; align-items: center; padding: 10px 0 12px; }
.act-top { display: flex; flex-direction: column; align-items: center; gap: 20px; }
.act-bottom { display: flex; flex-direction: column; align-items: center; gap: 22px; }
.py-act { fill: #858585; margin-top: 2px; }
.main { flex: 1; min-width: 0; display: flex; flex-direction: column; }

.tabs { height: 35px; flex: none; display: flex; justify-content: space-between; background: #181818; border-bottom: 1px solid #2b2b2b; }
.tab { width: 120px; height: 35px; display: flex; align-items: center; padding-left: 13px; background: #1f1f1f; border-top: 1px solid #0078d4; border-right: 1px solid #2b2b2b; border-left: 1px solid #2b2b2b; font-size: 12.500px; color: #fff; }
.pyico { fill: #519aba; }
.tab-name { margin-left: 5px; margin-right: 9px; width: 58px; }
.tab-actions { display: flex; align-items: center; padding-right: 15px; }
.run { margin-right: 3px; }
.small-chev { margin-right: 9px; }
.act-a { margin-right: 11px; }
.act-b { margin-right: 10px; }

.editor { height: 619px; flex: none; display: flex; flex-direction: column; background: #1f1f1f; overflow: hidden; }
.crumbs { height: 22px; flex: none; display: flex; align-items: center; padding-left: 20px; font-size: 12.200px; color: #a9a9a9; }
.crumbs .pyico { margin-right: 5px; }
.crumb-sep { margin: 0 3px 0 4px; stroke: #a9a9a9; }
.cube { fill: none; stroke: #b180d7; stroke-width: 1; margin-right: 5px; }
.editor-body { flex: 1; min-height: 0; display: flex; }
.code { width: 795px; overflow: hidden; position: relative; font-family: "DejaVu Sans Mono", "Liberation Mono", monospace; font-size: 12.800px; }
.hover-band { position: absolute; left: 68px; top: 584px; width: 516px; height: 14px; background: #2d2d2d; }
.ln { height: 19px; display: flex; line-height: 19px; position: relative; white-space: pre; }
.ln b { width: 68px; flex: none; padding-right: 26px; text-align: right; font-weight: 400; color: #6e7681; }
.ln code { font: inherit; color: #d4d4d4; flex: 1; min-width: 0; }
.ln i { font-style: normal; }
.g1 { background: linear-gradient(#404040, #404040) .5px 0 / 1px 100% no-repeat; }
.g2 { background: linear-gradient(#404040, #404040) .5px 0 / 1px 100% no-repeat, linear-gradient(#404040, #404040) 31.500px 0 / 1px 100% no-repeat; }
.g2.hot { background: linear-gradient(#404040, #404040) .5px 0 / 1px 100% no-repeat, linear-gradient(#707070, #707070) 31.500px 0 / 1px 100% no-repeat; }
.ln.active b { color: #ccc; }
.ln.active code { box-shadow: inset 0 0 0 2px #282828; }
.c { color: #6a9955 !important; }
.k { color: #c586c0; }
.d { color: #569cd6; }
.f { color: #dcdcaa; }
.v { color: #9cdcfe; }
.o { color: #4fc1ff; }
.m { color: #4ec9b0; }
.n { color: #b5cea8; }
.y { color: #ffd700; }
.p { color: #da70d6; }
.minimap { width: 104px; background: #1f1f1f; border-left: 1px solid #161616; box-shadow: -2px 0 3px #161616; position: relative; }
.minimap svg { margin-left: -1px; opacity: .8; }
.vscroll { flex: 1; border-left: 1px solid #2a2a2a; }
.slider { display: block; height: 116px; background: #2e2e2e; position: relative; }
.marker { position: absolute; left: 0; right: 0; top: 103px; height: 2px; background: #8f8f8f; }

.panel { height: 329px; flex: none; background: #181818; border-top: 1px solid #2b2b2b; display: flex; flex-direction: column; }
.panel-head { height: 34px; flex: none; display: flex; justify-content: space-between; align-items: center; padding-left: 20px; }
.panel-tabs { display: flex; gap: 23.500px; font-size: 10.500px; color: #9d9d9d; height: 34px; align-items: center; }
.panel-tabs span { height: 20px; display: flex; align-items: center; }
.panel-tabs .on { color: #e7e7e7; box-shadow: 0 1px 0 0 #0078d4; padding: 0 2px; margin: 0 -2px; }
.panel-actions { display: flex; align-items: center; padding-right: 17px; font-size: 11px; }
.termic { color: #c5c5c5; margin-right: 6px; }
.pname { margin-right: 7px; color: #c5c5c5; }
.pa-chev { margin: 0 11px 0 4px; stroke: #999; }
.pa-trash { margin: 0 9px; }
.pa-dots { margin-right: 10px; }
.pa-sep { width: 1px; height: 16px; background: #444; margin-right: 13px; }
.pa-max { margin-right: 13px; }
.panel-body { flex: 1; min-height: 0; display: flex; }
.pane { width: 397px; display: flex; border-right: 1px solid #2b2b2b; padding: 5px 0 0 20px; }
.term { flex: 1; margin: 1px 0 0; font: 11.680px/17px "DejaVu Sans Mono", "Liberation Mono", monospace; color: #ccc; }
.cur { display: inline-block; width: 8px; height: 16px; border: 1px solid #ccc; vertical-align: top; }
.cur.solid { background: #ccc; }
.ruler { width: 14px; border-left: 1px solid #000; border-top: 1px solid #000; }
.termlist { flex: 1; margin-top: -1px; font-size: 12.500px; color: #c5c5c5; }
.titem { height: 22px; display: flex; align-items: center; padding-left: 11px; gap: 3px; }
.titem svg { color: #c5c5c5; }
.titem.sel { background: #37373d; box-shadow: inset 1px 0 0 #0078d4; }
.tree { font-family: "DejaVu Sans Mono", monospace; width: 8px; font-size: 13px; }

.status { height: 21px; flex: none; display: flex; align-items: center; border-top: 1px solid #2b2b2b; font-size: 11.200px; color: #ccc; }
.remote { width: 34px; height: 20px; background: #0078d4; display: flex; align-items: center; justify-content: center; }
.problems { display: flex; align-items: center; gap: 3px; margin-left: 8px; font-size: 12px; }
.status-right { margin-left: auto; display: flex; align-items: center; gap: 17px; padding-right: 15px; }
.status-right .cop { margin: 0 -2px 0 0; }
.lang { display: flex; gap: 8px; }
.braces { font-style: normal; }

/* figure windows */
.figures { width: 960px; display: flex; flex-direction: column; }
.figure { height: 520px; background: #fff; border: 1px solid #2b2b2b; border-width: 1px 1px 0 1px; display: flex; flex-direction: column; }
.figure:first-child { border-bottom-width: 1px; }
.fig-title { height: 31px; flex: none; display: flex; align-items: center; gap: 5px; padding: 0 0 2px 8px; font-size: 11.800px; color: #999; }
.fig-ctl { margin-left: auto; display: flex; gap: 33.500px; padding-right: 17px; }
.fig-ctl svg { fill: none; stroke: #999; stroke-width: 1; }
.fig-tools { height: 33px; flex: none; background: #efefef; border-bottom: 1px solid #aaa; }
.chart { flex: none; }
.chart text { font-family: "DejaVu Sans", sans-serif; font-size: 13.890px; fill: #000; }
.chart .t-title { font-size: 16.670px; text-anchor: middle; }
.chart .t-lab { text-anchor: middle; }
.xt text { text-anchor: middle; }
.yt text { text-anchor: end; }
.grid path { fill: none; stroke: #e0e0e0; stroke-width: 1.100; }
.tk path { fill: none; stroke: #000; stroke-width: 1.100; }
.axes { fill: none; stroke: #000; stroke-width: 1.100; }
.l { fill: none; stroke-width: 2.800; stroke-linejoin: miter; }
.l.r { stroke: #f00; }
.l.g { stroke: #008000; }
.l.b { stroke: #00f; }
.lg { fill: #fff; fill-opacity: .8; stroke: #ccc; stroke-width: 1.100; }

/* taskbar */
.taskbar { height: 41px; flex: none; display: flex; background: #181818; }
.tb-item { width: 49px; height: 41px; display: flex; align-items: center; justify-content: center; }
.search-task svg { margin-right: 3px; }
.tb-item.active { background: #4a4a4a linear-gradient(#76dde6, #76dde6) bottom / 100% 2px no-repeat; }
.vs-task { fill: #0e8fe0; }
.run40 { background: linear-gradient(#76dde6, #76dde6) bottom / 40px 2px no-repeat; }
.runmpl { background: linear-gradient(#76dde6, #76dde6) 5px 100% / 31px 2px no-repeat, linear-gradient(#4aa8b0, #4aa8b0) 36px 100% / 9px 2px no-repeat; }
.chrome-badge { position: relative; display: block; }
.badge { position: absolute; right: -4px; bottom: -2px; }
.sw { display: flex; flex-direction: column; align-items: center; width: 24px; height: 28px; background: linear-gradient(#d2232a 70%, #181818 70%); font-family: "Liberation Sans", sans-serif; font-weight: 700; color: #fff; }
.sw-top { font-size: 10px; line-height: 16px; }
.sw-yr { font-size: 8.500px; line-height: 10px; background: #111; padding: 0 2px; }
.tray { margin-left: auto; display: flex; align-items: center; }
.tray > svg:nth-child(1) { margin-right: 8px; }
.tray > svg:nth-child(2) { margin-right: 7px; }
.clock { width: 62px; margin: 0 15px 0 9px; display: flex; flex-direction: column; align-items: center; font-size: 12px; line-height: 17px; color: #ddd; }
.notif { position: relative; display: block; margin-right: 25px; }
.notif-n { position: absolute; left: 8px; top: 3px; width: 16px; height: 16px; border-radius: 50%; background: #333; border: 1px solid #888; font-size: 10px; line-height: 14px; text-align: center; color: #ddd; }
```
